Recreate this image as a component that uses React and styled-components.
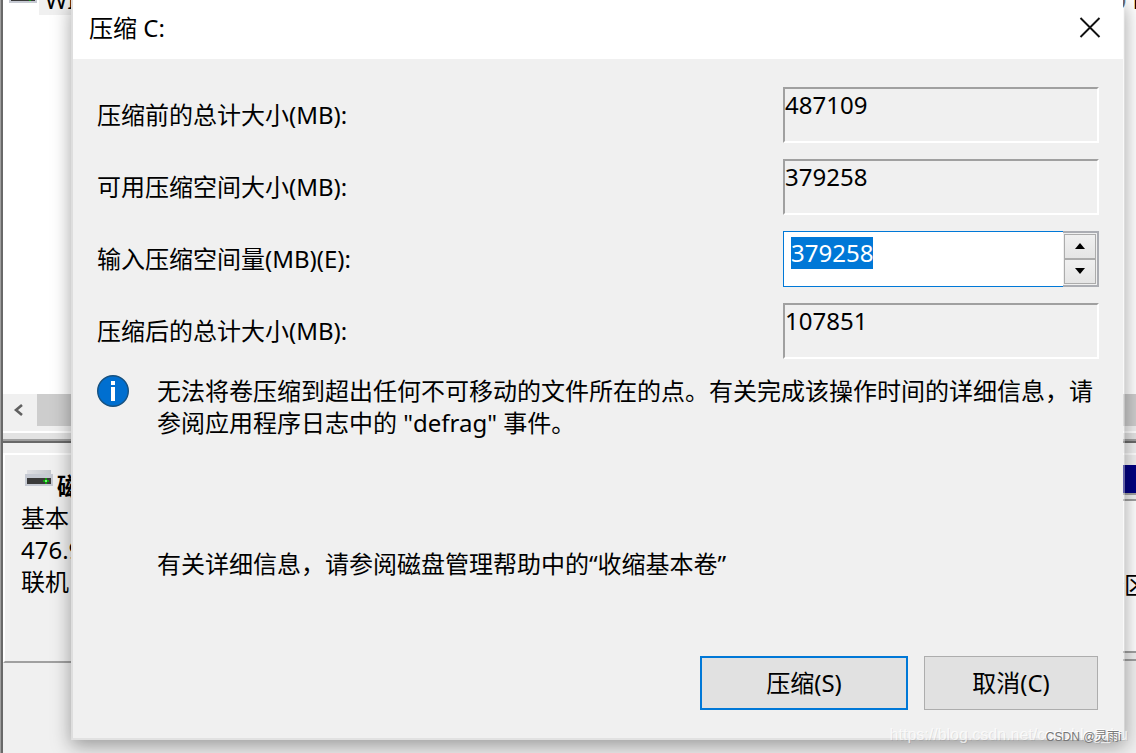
import React, { useEffect, useRef, useState } from 'react';
import styled, { createGlobalStyle } from 'styled-components';

const GlobalStyle = createGlobalStyle`
  * {
    box-sizing: border-box;
  }
  body {
    margin: 0;
    background: #f0f0f0;
    color: #000;
    font-family: 'Noto Sans', 'Noto Sans CJK SC', sans-serif;
    font-size: 24px;
    line-height: 32px;
  }
  button,
  input {
    font: inherit;
    color: inherit;
  }
`;

const Screen = styled.div`
  display: grid;
  grid-template-columns: minmax(0, 1fr);
  min-height: 100vh;
  overflow: hidden;
  position: relative;
  background: #a0a0a0;
`;

/* disk management window behind the dialog */

const Backdrop = styled.div`
  grid-area: 1 / 1;
  display: flex;
  flex-direction: column;
  margin-left: 1px;
  border-left: 2px solid #696969;
  background: #f0f0f0;
  overflow: hidden;
`;

const VolumeList = styled.div`
  display: flex;
  justify-content: space-between;
  height: 394px;
  background: #fff;
`;

const VolumeName = styled.div`
  display: flex;
  align-items: flex-start;
  gap: 2px;
  padding-left: 6px;

  svg {
    margin-top: -13px;
  }
  span {
    height: 15px;
    padding: 0 8px 0 6px;
    background: #f0f0f0;
    line-height: 0;
  }
`;

const VolumeStatus = styled.div`
  margin-right: -12px;
  line-height: 0;
  white-space: nowrap;
`;

const ScrollBar = styled.div`
  display: grid;
  grid-template-columns: 34px 1fr;
  height: 37px;
  padding-bottom: 5px;
  background: #f0f0f0;

  button {
    display: flex;
    align-items: center;
    padding: 0 10px;
    border: 0;
    background: #f0f0f0;
  }
`;

const Thumb = styled.div`
  background: #cdcdcd;
`;

const Splitter = styled.div`
  height: 22px;
  border-top: 2px solid #fff;
  background: linear-gradient(
    #e3e3e3 0 6px,
    #a0a0a0 6px 8px,
    #696969 8px 10px,
    #f0f0f0 10px
  );
`;

const DiskRow = styled.div`
  display: flex;
  height: 210px;
  border-top: 2px solid #fff;
`;

const DiskInfo = styled.div`
  width: 240px;
  padding: 15px 16px;
  border-left: 2px solid #fff;
  border-bottom: 2px solid #a0a0a0;
  white-space: nowrap;
`;

const DiskTitle = styled.div`
  display: flex;
  align-items: flex-start;
  gap: 4px;
  padding-left: 4px;
  font-weight: 700;
`;

const Partition = styled.div`
  display: flex;
  flex: 1;
  flex-direction: column;
  gap: 4px;
  margin: 10px 0 2px;
  padding-bottom: 2px;
  border-bottom: 2px solid #a0a0a0;
`;

const PartitionBar = styled.div`
  height: 30px;
  border-bottom: 2px solid #a0a0a0;
  background: #000080;
`;

const PartitionBody = styled.div`
  height: 154px;
  padding-top: 68px;
  border-top: 2px solid #a0a0a0;
  border-bottom: 2px solid #a0a0a0;
  background: #fff;
  text-align: right;

  span {
    margin-right: -12px;
  }
`;

/* the dialog itself */

const Dialog = styled.section`
  grid-area: 1 / 1;
  align-self: start;
  z-index: 1;
  margin: 0 11px 12px 71px;
  border: 2px solid rgba(240, 240, 240, 0.4);
  border-top: 0;
  border-left-color: #dedede;
  border-bottom-color: #e1e1e1;
  background: #f0f0f0;
  background-clip: padding-box;
  box-shadow: 0 6px 18px rgba(0, 0, 0, 0.36);
`;

const TitleBar = styled.header`
  display: flex;
  align-items: center;
  justify-content: space-between;
  height: 59px;
  padding: 0 22px 4px 16px;
  background: #fff;

  h1 {
    margin: 0;
    font-size: 24px;
    font-weight: 400;
  }
  button {
    display: flex;
    padding: 0;
    border: 0;
    background: none;
  }
`;

const Body = styled.form`
  display: flex;
  flex-direction: column;
  gap: 16px;
  padding: 28px 24px;
`;

const Row = styled.div`
  display: grid;
  grid-template-columns: minmax(0, 1fr) 316px;
  align-items: center;
`;

const ReadOnlyValue = styled.output`
  display: block;
  height: 56px;
  border: 2px solid #fff;
  border-top-color: #a0a0a0;
  border-left-color: #a0a0a0;
`;

const SpinBox = styled.div`
  display: flex;
  height: 56px;
`;

const SpinInput = styled.input`
  flex: 1;
  min-width: 0;
  padding: 0 7px 12px;
  border: 1px solid #0078d7;
  border-right: 0;
  border-radius: 0;
  outline: none;
  background: #fff;
  line-height: 32px;

  &::selection {
    background: #0078d7;
    color: #fff;
  }
`;

const SpinButtons = styled.div`
  display: flex;
  flex-direction: column;
  width: 36px;
  padding: 1px;
  border: 2px solid #abadb3;
  border-left: 0;
  background: #f0f0f0;

  button {
    display: flex;
    flex: 1;
    align-items: center;
    justify-content: center;
    padding: 0 0 2px;
    border: 1px solid #acacac;
    background: linear-gradient(#f0f0f0, #e5e5e5);
  }
`;

const Message = styled.div`
  display: grid;
  grid-template-columns: 32px minmax(0, 1fr);
  gap: 28px;
  min-height: 157px;

  p {
    margin: 0;
  }
`;

const HelpText = styled.p`
  margin: 0 0 60px 60px;
`;

const Actions = styled.div`
  display: flex;
  justify-content: flex-end;
  gap: 16px;
  padding-right: 1px;
`;

const ActionButton = styled.button`
  width: ${props => (props.$primary ? '208px' : '174px')};
  height: 54px;
  padding: 0;
  border: ${props => (props.$primary ? '2px solid #0078d7' : '1px solid #adadad')};
  background: #e1e1e1;
`;

const Watermark = styled.div`
  position: absolute;
  z-index: 2;
  right: 8px;
  bottom: 8px;
  color: rgba(255, 255, 255, 0.7);
  font-family: 'Liberation Sans', 'Noto Sans CJK SC', sans-serif;
  font-size: 16px;
  line-height: 20px;
  text-shadow: 1px 1px rgba(0, 0, 0, 0.08);
  white-space: nowrap;
`;

const Signature = styled(Watermark)`
  right: 14px;
  bottom: 6px;
  color: #777;
  font-size: 12px;
  text-shadow: -1px -1px #fff;
`;

const DriveIcon = () => (
  <svg width="28" height="16" viewBox="0 0 28 16" aria-hidden="true">
    <defs>
      <linearGradient id="drive" x1="0" x2="1">
        <stop offset="0" stopColor="#dfe0e4" />
        <stop offset="1" stopColor="#c3c7cd" />
      </linearGradient>
    </defs>
    <path d="M2 0h24v4H2z" fill="url(#drive)" />
    <path d="M0 4h28v12H0z" fill="#c6cad3" />
    <path d="M2 8h24v6H2z" fill="#3a3a3a" />
    <path d="M18 10h6v2h-6zM20 8h2v6h-2z" fill="#0f9d0f" />
    <path d="M20 10h2v2h-2z" fill="#6dff6d" />
  </svg>
);

const InfoIcon = () => (
  <svg width="32" height="32" viewBox="0 0 32 32" aria-hidden="true">
    <circle cx="16" cy="16" r="15.3" fill="#006fd0" stroke="#17517f" strokeWidth="1.4" />
    <path d="M14 6h4v4h-4zM14 12h4v14h-4z" fill="#fff" />
  </svg>
);

const CloseIcon = () => (
  <svg width="22" height="22" viewBox="0 0 22 22" aria-hidden="true">
    <path d="M1.5 1l19 19M20.5 1l-19 19" stroke="#111" strokeWidth="1.9" />
  </svg>
);

const Arrow = ({ down }) => (
  <svg width="10" height="6" viewBox="0 0 10 6" aria-hidden="true">
    <path d={down ? 'M0 0h10L5 6z' : 'M0 6h10L5 0z'} />
  </svg>
);

const TOTAL = 487109;
const AVAILABLE = 379258;

const App = () => {
  const [amount, setAmount] = useState(String(AVAILABLE));
  const input = useRef(null);

  useEffect(() => {
    input.current.focus();
    input.current.select();
  }, []);

  const step = diff => {
    const next = Number(amount) + diff;
    setAmount(String(Math.max(0, Math.min(AVAILABLE, next))));
  };

  return (
    <Screen>
      <GlobalStyle />
      <Backdrop>
        <VolumeList>
          <VolumeName>
            <DriveIcon />
            <span>WI</span>
          </VolumeName>
          <VolumeStatus>0 B</VolumeStatus>
        </VolumeList>
        <ScrollBar>
          <button type="button" aria-label="向左滚动">
            <svg width="10" height="12" viewBox="0 0 10 12" aria-hidden="true">
              <path d="M9 1L3 6l6 5" fill="none" stroke="#606060" strokeWidth="2.6" />
            </svg>
          </button>
          <Thumb />
        </ScrollBar>
        <Splitter />
        <DiskRow>
          <DiskInfo>
            <DiskTitle>
              <DriveIcon />
              磁盘 0
            </DiskTitle>
            <div>基本</div>
            <div>476.92 GB</div>
            <div>联机</div>
          </DiskInfo>
          <Partition>
            <PartitionBar />
            <PartitionBody>
              <span>分区</span>
            </PartitionBody>
          </Partition>
        </DiskRow>
      </Backdrop>

      <Dialog role="dialog" aria-labelledby="title">
        <TitleBar>
          <h1 id="title">压缩 C:</h1>
          <button type="button" aria-label="关闭">
            <CloseIcon />
          </button>
        </TitleBar>
        <Body onSubmit={e => e.preventDefault()}>
          <Row>
            <label htmlFor="total">压缩前的总计大小(MB):</label>
            <ReadOnlyValue id="total">{TOTAL}</ReadOnlyValue>
          </Row>
          <Row>
            <label htmlFor="available">可用压缩空间大小(MB):</label>
            <ReadOnlyValue id="available">{AVAILABLE}</ReadOnlyValue>
          </Row>
          <Row>
            <label htmlFor="amount">输入压缩空间量(MB)(E):</label>
            <SpinBox>
              <SpinInput
                id="amount"
                ref={input}
                inputMode="numeric"
                autoComplete="off"
                value={amount}
                onChange={e => setAmount(e.target.value.replace(/\D/g, ''))}
              />
              <SpinButtons>
                <button type="button" aria-label="增加" onClick={() => step(1)}>
                  <Arrow />
                </button>
                <button type="button" aria-label="减少" onClick={() => step(-1)}>
                  <Arrow down />
                </button>
              </SpinButtons>
            </SpinBox>
          </Row>
          <Row>
            <label htmlFor="after">压缩后的总计大小(MB):</label>
            <ReadOnlyValue id="after">{TOTAL - Number(amount)}</ReadOnlyValue>
          </Row>
          <Message>
            <InfoIcon />
            <p>
              无法将卷压缩到超出任何不可移动的文件所在的点。有关完成该操作时间的详细信息，请参阅应用程序日志中的
              "defrag" 事件。
            </p>
          </Message>
          <HelpText>有关详细信息，请参阅磁盘管理帮助中的“收缩基本卷”</HelpText>
          <Actions>
            <ActionButton $primary>压缩(S)</ActionButton>
            <ActionButton type="button">取消(C)</ActionButton>
          </Actions>
        </Body>
      </Dialog>

      <Watermark>https://blog.csdn.net/csdnblog_hu</Watermark>
      <Signature>CSDN @灵雨i</Signature>
    </Screen>
  );
};

export default App;
